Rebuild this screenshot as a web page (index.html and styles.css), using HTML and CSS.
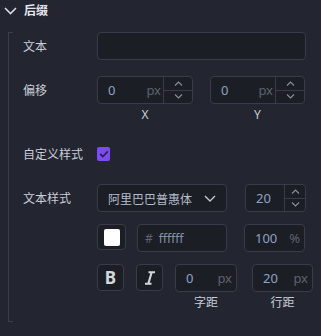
FILE: index.html
```html
<!DOCTYPE html>
<html>
<head>
<meta charset="utf-8">
<link rel="stylesheet" href="styles.css">
</head>
<body>
<div class="panel">
  <div class="head">
    <svg class="head-chev" width="13" height="8" viewBox="0 0 13 8"><path d="M1 1 L6.5 6.5 L12 1" fill="none" stroke="#d5d9e2" stroke-width="1.6"/></svg>
    <span class="head-title">后缀</span>
  </div>
  <div class="body">
    <div class="bracket"></div>
    <div class="rows">
      <div class="row r1">
        <div class="label">文本</div>
        <div class="field w-full"></div>
      </div>

      <div class="row r2">
        <div class="label">偏移</div>
        <div class="pair">
          <div class="col w96">
            <div class="field num">
              <span class="val">0</span><span class="unit us">px</span>
              <div class="step">
                <div class="st"><svg width="9" height="5" viewBox="0 0 9 5"><path d="M1 4.5 L4.5 1 L8 4.5" fill="none" stroke="#8a909c" stroke-width="1.1"/></svg></div>
                <div class="st"><svg width="9" height="5" viewBox="0 0 9 5"><path d="M1 0.5 L4.5 4 L8 0.5" fill="none" stroke="#8a909c" stroke-width="1.1"/></svg></div>
              </div>
            </div>
            <div class="sub">X</div>
          </div>
          <div class="col w95">
            <div class="field num">
              <span class="val">0</span><span class="unit us">px</span>
              <div class="step">
                <div class="st"><svg width="9" height="5" viewBox="0 0 9 5"><path d="M1 4.5 L4.5 1 L8 4.5" fill="none" stroke="#8a909c" stroke-width="1.1"/></svg></div>
                <div class="st"><svg width="9" height="5" viewBox="0 0 9 5"><path d="M1 0.5 L4.5 4 L8 0.5" fill="none" stroke="#8a909c" stroke-width="1.1"/></svg></div>
              </div>
            </div>
            <div class="sub">Y</div>
          </div>
        </div>
      </div>

      <div class="row r3">
        <div class="label">自定义样式</div>
        <div class="check"><svg width="10" height="8" viewBox="0 0 10 8"><path d="M1.2 4 L3.8 6.5 L8.8 1.3" fill="none" stroke="#2b2347" stroke-width="1.8"/></svg></div>
      </div>

      <div class="row r4">
        <div class="label">文本样式</div>
        <div class="field select">
          <span class="sel-text">阿里巴巴普惠体</span>
          <svg width="12" height="7" viewBox="0 0 12 7"><path d="M1 1 L6 6 L11 1" fill="none" stroke="#c2c7d1" stroke-width="1.4"/></svg>
        </div>
        <div class="field num w61 ml18">
          <span class="val">20</span>
          <div class="step s21">
            <div class="st"><svg width="9" height="5" viewBox="0 0 9 5"><path d="M1 4.5 L4.5 1 L8 4.5" fill="none" stroke="#8a909c" stroke-width="1.1"/></svg></div>
            <div class="st"><svg width="9" height="5" viewBox="0 0 9 5"><path d="M1 0.5 L4.5 4 L8 0.5" fill="none" stroke="#8a909c" stroke-width="1.1"/></svg></div>
          </div>
        </div>
      </div>

      <div class="row r5">
        <div class="label"></div>
        <div class="field swatch"><div class="swatch-in"></div></div>
        <div class="field hex"><span class="hash">#</span><span class="hexval">ffffff</span></div>
        <div class="field num w61 ml17"><span class="val">100</span><span class="unit">%</span></div>
      </div>

      <div class="row r6">
        <div class="label"></div>
        <div class="field btn">B</div>
        <div class="field btn ml12">
          <svg width="12" height="14" viewBox="0 0 12 14"><path d="M4.5 1.3 H11 M1 12.7 H7.5 M7.7 1.3 L4.3 12.7" fill="none" stroke="#d3d6dd" stroke-width="2.1"/></svg>
        </div>
        <div class="col w62 ml12">
          <div class="field num"><span class="val">0</span><span class="unit">px</span></div>
          <div class="sub">字距</div>
        </div>
        <div class="col w61 ml15">
          <div class="field num"><span class="val">20</span><span class="unit">px</span></div>
          <div class="sub">行距</div>
        </div>
      </div>
    </div>
  </div>
</div>
</body>
</html>
```
FILE: styles.css
```css
* { box-sizing: border-box; }
html, body { margin: 0; padding: 0; }
body {
  background: #232530;
  width: 321px;
  height: 336px;
  overflow: hidden;
  font-family: "Noto Sans CJK SC", "Noto Sans", sans-serif;
  color: #c9cdd7;
  font-size: 12px;
}
.head {
  display: flex;
  align-items: center;
  height: 20px;
  padding-left: 4px;
}
.head-chev { margin-top: 1px; }
.head-title {
  margin-left: 7px;
  font-size: 12px;
  font-weight: 700;
  color: #e4e7ee;
  line-height: 20px;
}
.body {
  display: flex;
  margin-top: 12px;
  padding-left: 8px;
}
.bracket {
  width: 5px;
  height: 290px;
  border: 1px solid #3b3e4a;
  border-right: none;
  flex: none;
}
.rows {
  margin-left: 10px;
  display: flex;
  flex-direction: column;
}
.row { display: flex; align-items: flex-start; }
.label {
  width: 74px;
  flex: none;
  line-height: 28px;
  height: 28px;
  color: #c9cdd7;
}
.field {
  background: #1c1e26;
  border: 1px solid #393c48;
  border-radius: 4px;
  height: 28px;
  flex: none;
}
.w-full { width: 209px; }
.r2 { margin-top: 16px; }
.pair { display: flex; gap: 17px; }
.col { display: flex; flex-direction: column; flex: none; }
.w96 { width: 96px; }
.w95 { width: 95px; }
.w62 { width: 62px; }
.w61 { width: 61px; }
.ml18 { margin-left: 18px; }
.ml17 { margin-left: 17px; }
.ml12 { margin-left: 12px; }
.ml15 { margin-left: 15px; }
.num {
  display: flex;
  align-items: center;
  padding-left: 10px;
}
.val { color: #8ea3c2; font-family: "Noto Sans", sans-serif; font-size: 13px; }
.unit {
  margin-left: auto;
  margin-right: 4px;
  color: #5d626e;
  font-family: "Noto Sans", sans-serif;
  font-size: 13px;
}
.unit.us { margin-right: 2px; }
.step {
  width: 29px;
  align-self: stretch;
  border-left: 1px solid #393c48;
  display: flex;
  flex-direction: column;
  flex: none;
}
.step.s21 { width: 21px; margin-left: auto; }
.st {
  flex: 1;
  display: flex;
  align-items: center;
  justify-content: center;
}
.st + .st { border-top: 1px solid #393c48; }
.sub {
  text-align: center;
  color: #c9cdd7;
  font-family: "Noto Sans", "Noto Sans CJK SC", sans-serif;
  font-size: 12px;
  line-height: 16px;
  margin-top: 3px;
}
.r3 { margin-top: 22px; align-items: center; }
.r3 .label { line-height: 18px; height: 18px; }
.check {
  width: 13px;
  height: 14px;
  background: #7b4cf4;
  border-radius: 2px;
  display: flex;
  align-items: center;
  justify-content: center;
}
.r4 { margin-top: 21px; }
.select {
  width: 130px;
  display: flex;
  align-items: center;
  justify-content: space-between;
  padding: 0 10px 0 10px;
}
.sel-text { color: #b4bccb; font-size: 12px; }
.r5 { margin-top: 12px; }
.swatch {
  width: 29px;
  height: 26px;
  display: flex;
  align-items: center;
  justify-content: center;
}
.swatch-in {
  width: 16px;
  height: 17px;
  background: #ffffff;
  border-radius: 2px;
}
.hex {
  width: 90px;
  margin-left: 11px;
  display: flex;
  align-items: center;
  padding-left: 7px;
  font-family: "Noto Sans", sans-serif;
  font-size: 12px;
}
.hash { color: #5d626e; }
.hexval { color: #8293ad; margin-left: 6px; }
.r6 { margin-top: 12px; }
.btn {
  width: 27px;
  height: 27px;
  display: flex;
  align-items: center;
  justify-content: center;
  font-family: "Noto Sans", sans-serif;
  font-weight: 700;
  font-size: 17px;
  color: #d3d6dd;
}
```
